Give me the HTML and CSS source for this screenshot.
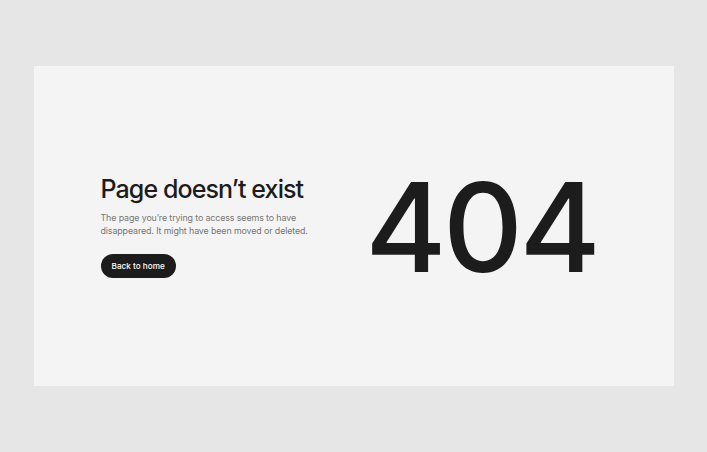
FILE: index.html
```html
<!DOCTYPE html>
<html lang="en">
  <head>
    <meta charset="UTF-8" />
    <meta name="viewport" content="width=device-width, initial-scale=1.0" />
    <title>Page not found</title>
    <link rel="stylesheet" href="styles.css">
  </head>
  <body>
    <div class="page">
      <div class="card">
        <div class="info">
          <h1>Page doesn’t exist</h1>
          <p>The page you’re trying to access seems to have disappeared. It might have been moved or deleted.</p>
          <a class="btn" href="#">Back to home</a>
        </div>
        <div class="code">404</div>
      </div>
    </div>
  </body>
</html>
```

FILE: styles.css
```css
body {
  margin: 0;
  background: #e6e6e6;
  font-family: Inter, "Noto Sans", sans-serif;
  color: #1c1c1c;
}
.page {
  height: 452px;
  display: flex;
  align-items: center;
  justify-content: center;
}
.card {
  width: 640px;
  height: 320px;
  box-sizing: border-box;
  background: #f4f4f4;
  display: flex;
  align-items: center;
  padding: 0 76px 0 67px;
  justify-content: space-between;
}
.info {
  width: 215px;
  margin-top: -2px;
}
h1 {
  margin: 0 0 6px;
  font-size: 25px;
  font-weight: 500;
  letter-spacing: -0.9px;
  line-height: 32px;
}
p {
  margin: 0 0 16px;
  font-size: 8.9px;
  line-height: 13px;
  color: #767676;
  letter-spacing: -0.12px;
}
.btn {
  display: inline-block;
  background: #1c1c1c;
  color: #fff;
  text-decoration: none;
  font-size: 8.2px;
  font-weight: 500;
  height: 24px;
  line-height: 24px;
  padding: 0 11px;
  border-radius: 12px;
}
.code {
  font-size: 124px;
  font-weight: 500;
  line-height: 1;
  letter-spacing: -3.5px;
  margin-top: 2px;
}
```
